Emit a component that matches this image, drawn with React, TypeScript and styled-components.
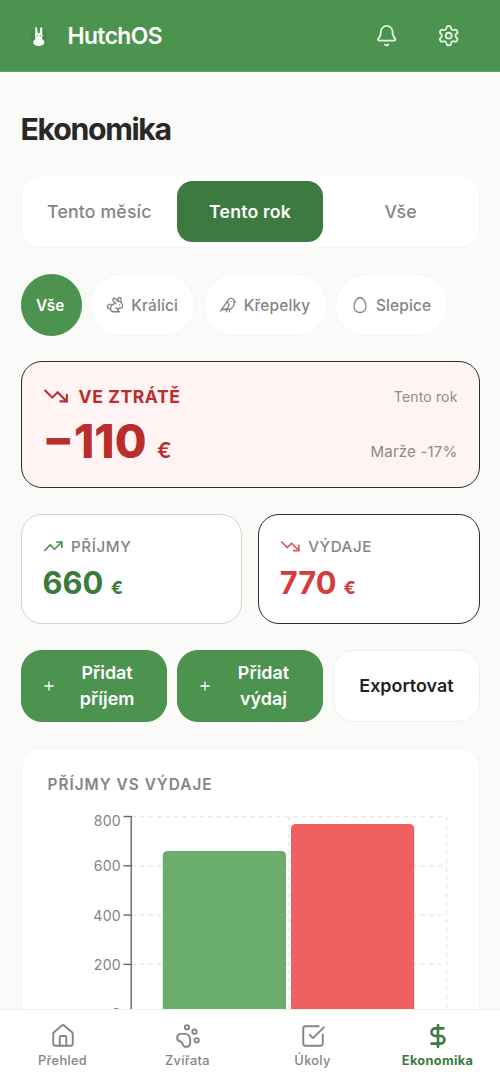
import React from 'react';
import styled, { createGlobalStyle, css } from 'styled-components';
import {
  Bell,
  Bird,
  DollarSign,
  Egg,
  House,
  PawPrint,
  Plus,
  Rabbit,
  Settings,
  SquareCheckBig,
  TrendingDown,
  TrendingUp,
} from 'lucide-react';

const c = {
  green: '#4c934f',
  greenDark: '#3c7a3f',
  greenText: '#397a3d',
  page: '#fafaf8',
  ink: '#282828',
  muted: '#868482',
  line: '#f6f6f4',
  red: '#b92d2d',
  redText: '#d43d3f',
};

const GlobalStyle = createGlobalStyle`
  * { box-sizing: border-box; }
  body { margin: 0; background: ${c.page}; overflow: hidden; }
  button { font: inherit; letter-spacing: inherit; border: 0; padding: 0; }
`;

const Screen = styled.div`
  height: 100vh;
  display: flex;
  flex-direction: column;
  font-family: Inter, 'Liberation Sans', sans-serif;
  letter-spacing: 0.01em;
  color: ${c.ink};
  background: ${c.page};
`;

const Header = styled.header`
  flex: none;
  height: 72px;
  padding: 0 40px 0 29px;
  display: flex;
  align-items: center;
  background: ${c.green};
  border-bottom: 1px solid #5fa562;
  color: #fff;
`;

const Brand = styled.div`
  margin-left: 18.5px;
  flex: 1;
  font-size: 22.8px;
  font-weight: 600;
  letter-spacing: -0.024em;
`;

const IconButton = styled.button`
  display: flex;
  margin-left: 38px;
  background: none;
  color: #e3f3e2;
`;

const Main = styled.main`
  flex: 1;
  min-height: 0;
  overflow: hidden;
  padding: 38px 20.5px 0;
  display: flex;
  flex-direction: column;
`;

const Title = styled.h1`
  margin: 0 0 27px;
  font-size: 30.3px;
  line-height: 38px;
  font-weight: 700;
  letter-spacing: -0.044em;
`;

const Tabs = styled.div`
  flex: none;
  height: 73px;
  display: grid;
  grid-template-columns: repeat(3, 1fr);
  gap: 5px;
  padding: 5px;
  border: 1px solid ${c.line};
  border-radius: 20px;
  background: #fff;
`;

const Tab = styled.button<{ $active?: boolean }>`
  font-size: 17.7px;
  font-weight: ${p => (p.$active ? 600 : 500)};
  border-radius: 15.5px;
  color: ${p => (p.$active ? '#fff' : c.muted)};
  background: ${p => (p.$active ? c.greenDark : 'transparent')};
`;

const Chips = styled.div`
  flex: none;
  display: flex;
  align-items: center;
  gap: 8.1px;
  margin-top: 26.3px;
`;

const Chip = styled.button<{ $active?: boolean }>`
  height: 61.5px;
  display: flex;
  align-items: center;
  gap: 6.8px;
  padding: 0 15.4px;
  border-radius: 31px;
  font-size: 15.4px;
  font-weight: 500;
  white-space: nowrap;
  border: 1px solid ${c.line};
  color: ${c.muted};
  background: #fff;
  ${p =>
    p.$active &&
    css`
      width: 61.5px;
      padding: 0 2px 0 0;
      justify-content: center;
      font-weight: 600;
      color: #fff;
      background: ${c.green};
      border-color: ${c.green};
    `}
`;

const Summary = styled.section`
  flex: none;
  height: 127px;
  margin-top: 25.5px;
  padding: 19.5px 21px 0;
  border: 1.3px solid #302c2d;
  border-radius: 21px;
  background: #fff4f3;
`;

const SummaryRow = styled.div`
  display: flex;
  align-items: center;
  justify-content: space-between;
`;

const Status = styled.div`
  display: flex;
  align-items: center;
  gap: 10px;
  height: 29px;
  font-size: 17.5px;
  font-weight: 700;
  letter-spacing: 0.035em;
  color: ${c.red};
`;

const Balance = styled.div`
  font-size: 46px;
  line-height: 60px;
  font-weight: 800;
  letter-spacing: 0;
  color: ${c.red};
`;

const Currency = styled.span<{ $size: number; $gap: number; $weight?: number }>`
  font-size: ${p => p.$size}px;
  font-weight: ${p => p.$weight ?? 700};
  margin-left: ${p => p.$gap}px;
`;

const Note = styled.div<{ $size: number; $drop?: number }>`
  font-size: ${p => p.$size}px;
  padding-top: ${p => p.$drop ?? 0}px;
  color: #918a89;
`;

const Stats = styled.div`
  flex: none;
  display: grid;
  grid-template-columns: 1fr 1fr;
  gap: 15.4px;
  margin-top: 25.5px;
`;

const Stat = styled.section<{ $border: string }>`
  height: 110.5px;
  padding: 19px 21px 0;
  border: 1.3px solid ${p => p.$border};
  border-radius: 21px;
  background: #fff;
`;

const StatLabel = styled.div`
  display: flex;
  align-items: center;
  gap: 8px;
  height: 25px;
  font-size: 15.2px;
  font-weight: 500;
  letter-spacing: 0.037em;
  color: ${c.muted};
`;

const StatValue = styled.div<{ $color: string }>`
  margin-top: 4px;
  font-size: 30.8px;
  line-height: 40px;
  font-weight: 700;
  letter-spacing: 0;
  color: ${p => p.$color};
`;

const Actions = styled.div`
  flex: none;
  display: grid;
  grid-template-columns: repeat(3, 1fr);
  gap: 10.25px;
  margin-top: 25.5px;
`;

const Action = styled.button<{ $plain?: boolean }>`
  height: 72px;
  display: flex;
  align-items: center;
  justify-content: center;
  border-radius: 21px;
  font-size: 17.9px;
  line-height: 25.6px;
  font-weight: 600;
  letter-spacing: 0;
  color: ${p => (p.$plain ? '#222' : '#fff')};
  background: ${p => (p.$plain ? '#fff' : c.green)};
  border: 1px solid ${p => (p.$plain ? '#efefec' : c.green)};
`;

const ActionText = styled.span`
  width: 76px;
  margin-left: 13px;
`;

const ChartCard = styled.section`
  flex: none;
  height: 360px;
  margin-top: 26px;
  padding: 25px 26px 0;
  border: 1px solid ${c.line};
  border-radius: 21px;
  background: #fff;
`;

const ChartTitle = styled.h2`
  margin: 0;
  font-size: 15.3px;
  line-height: 22px;
  font-weight: 600;
  letter-spacing: 0.068em;
  color: ${c.muted};
`;

const Plot = styled.svg`
  display: block;
  margin: 12px 0 0;
`;

const TickText = styled.text`
  font-size: 14.1px;
  letter-spacing: 0.02em;
  text-anchor: end;
  fill: ${c.muted};
`;

const Nav = styled.nav`
  flex: none;
  height: 73px;
  display: grid;
  grid-template-columns: repeat(4, 1fr);
  border-top: 1px solid #f0f0ed;
  background: #fff;
`;

const NavItem = styled.a<{ $active?: boolean }>`
  display: flex;
  flex-direction: column;
  align-items: center;
  padding-top: 13px;
  gap: 3px;
  font-size: 12.8px;
  line-height: 18px;
  letter-spacing: 0.024em;
  font-weight: ${p => (p.$active ? 700 : 500)};
  color: ${p => (p.$active ? c.greenText : c.muted)};
`;

const HareLogo = () => (
  <svg width="20" height="24" viewBox="0 0 20 24">
    <rect x="2" y="5" width="16" height="17" rx="6" fill="#3f8545" opacity=".45" />
    <path
      d="M6.2 3.6Q7.6 2.5 8.1 4.4L8.8 9.2H10.6L11.2 4.4Q11.8 2.5 13.2 3.6L13.3 9.5Q13.9 11.2 13.2 13.2Q12.8 14.8 13.6 15.6Q16.3 17.6 14.9 20Q13.4 21.9 9.8 21.9Q6 21.9 4.6 20Q3.2 17.6 6 15.6Q6.8 14.8 6.3 13.2Q5.6 11.2 6.2 9.5Z"
      fill="#fbfff8"
    />
    <circle cx="8.2" cy="11.8" r=".7" fill="#578b59" />
    <circle cx="11.3" cy="11.8" r=".7" fill="#578b59" />
  </svg>
);

const STEP = 49.3;
const ticks = [800, 600, 400, 200, 0];
const bars = [
  { x: 114.8, value: 660, fill: '#6bae6c' },
  { x: 243, value: 770, fill: '#ef6060' },
];

const BarChart = () => {
  const y = (v: number) => 8.5 + ((800 - v) / 200) * STEP;
  return (
    <Plot width="405" height="280" viewBox="0 0 405 280">
      <g stroke="#e6e6e4" strokeWidth="1.3" strokeDasharray="4.5 4">
        {ticks.map(t => (
          <path key={t} d={`M83.5 ${y(t)}H398.5`} />
        ))}
        <path d="M241.2 8.5V206M398.5 8.5V206" />
      </g>
      {bars.map(b => (
        <path
          key={b.x}
          fill={b.fill}
          d={`M${b.x} ${y(0)}V${y(b.value) + 5}q0-5 5-5h113.2q5 0 5 5V${y(0)}z`}
        />
      ))}
      <g stroke="#666" strokeWidth="1.4">
        <path d="M83.2 8V206" />
        {ticks.map(t => (
          <path key={t} d={`M75.5 ${y(t)}H83.2`} />
        ))}
      </g>
      {ticks.map(t => (
        <TickText key={t} x="73" y={y(t) + (t === 800 ? 9.5 : 5.5)}>
          {t}
        </TickText>
      ))}
    </Plot>
  );
};

export default function App() {
  return (
    <Screen>
      <GlobalStyle />
      <Header>
        <HareLogo />
        <Brand>HutchOS</Brand>
        <IconButton aria-label="Upozornění">
          <Bell size={23.4} strokeWidth={1.85} />
        </IconButton>
        <IconButton aria-label="Nastavení">
          <Settings size={23.4} strokeWidth={1.85} />
        </IconButton>
      </Header>
      <Main>
        <Title>Ekonomika</Title>
        <Tabs>
          <Tab>Tento měsíc</Tab>
          <Tab $active>Tento rok</Tab>
          <Tab>Vše</Tab>
        </Tabs>
        <Chips>
          <Chip $active>Vše</Chip>
          <Chip>
            <Rabbit size={18} strokeWidth={1.75} />
            Králíci
          </Chip>
          <Chip>
            <Bird size={18} strokeWidth={1.75} />
            Křepelky
          </Chip>
          <Chip>
            <Egg size={18} strokeWidth={1.75} />
            Slepice
          </Chip>
        </Chips>
        <Summary>
          <SummaryRow>
            <Status>
              <TrendingDown size={26} strokeWidth={1.95} />
              VE ZTRÁTĚ
            </Status>
            <Note $size={14}>Tento rok</Note>
          </SummaryRow>
          <SummaryRow>
            <Balance>
              −110
              <Currency $size={21.3} $gap={10.5} $weight={600}>
                €
              </Currency>
            </Balance>
            <Note $size={15.1} $drop={12}>
              Marže -17%
            </Note>
          </SummaryRow>
        </Summary>
        <Stats>
          <Stat $border="#c2dfc5">
            <StatLabel>
              <TrendingUp size={20.5} strokeWidth={2} color={c.green} />
              PŘÍJMY
            </StatLabel>
            <StatValue $color={c.greenText}>
              660
              <Currency $size={18} $gap={7.5}>
                €
              </Currency>
            </StatValue>
          </Stat>
          <Stat $border="#302c2d">
            <StatLabel>
              <TrendingDown size={20.5} strokeWidth={2} color="#df5454" />
              VÝDAJE
            </StatLabel>
            <StatValue $color={c.redText}>
              770
              <Currency $size={18} $gap={7}>
                €
              </Currency>
            </StatValue>
          </Stat>
        </Stats>
        <Actions>
          <Action>
            <Plus size={14} strokeWidth={2.2} />
            <ActionText>Přidat příjem</ActionText>
          </Action>
          <Action>
            <Plus size={14} strokeWidth={2.2} />
            <ActionText>Přidat výdaj</ActionText>
          </Action>
          <Action $plain>Exportovat</Action>
        </Actions>
        <ChartCard>
          <ChartTitle>PŘÍJMY VS VÝDAJE</ChartTitle>
          <BarChart />
        </ChartCard>
      </Main>
      <Nav>
        <NavItem>
          <House size={26} strokeWidth={1.75} />
          Přehled
        </NavItem>
        <NavItem>
          <PawPrint size={26} strokeWidth={1.75} />
          Zvířata
        </NavItem>
        <NavItem>
          <SquareCheckBig size={26} strokeWidth={1.75} />
          Úkoly
        </NavItem>
        <NavItem $active>
          <DollarSign size={26} strokeWidth={2.4} />
          Ekonomika
        </NavItem>
      </Nav>
    </Screen>
  );
}
